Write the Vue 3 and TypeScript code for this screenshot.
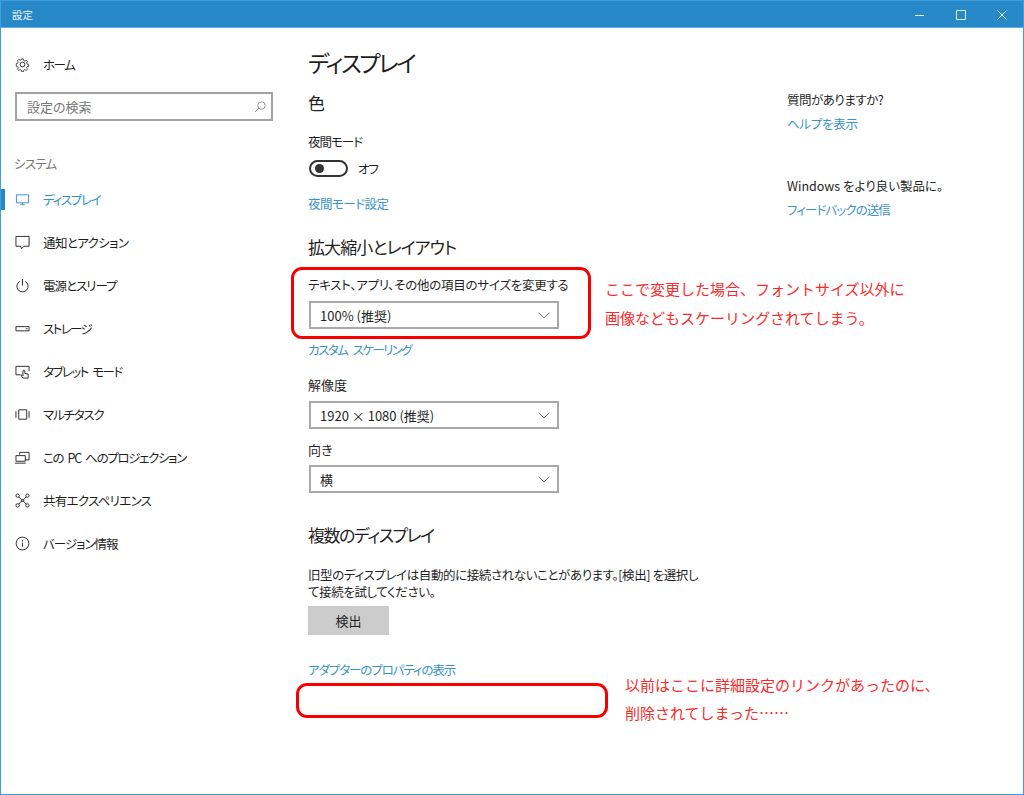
<script setup lang="ts">
// Windows 10 settings, display page, with red annotations on top
interface NavItem {
  label: string
  icon: string
  track: number
  active?: boolean
}

const navItems: NavItem[] = [
  { label: 'ディスプレイ', icon: 'display', track: -1.3, active: true },
  { label: '通知とアクション', icon: 'notify', track: -0.6 },
  { label: '電源とスリープ', icon: 'power', track: -1 },
  { label: 'ストレージ', icon: 'storage', track: -1.6 },
  { label: 'タブレット モード', icon: 'tablet', track: -1.5 },
  { label: 'マルチタスク', icon: 'multi', track: -1.2 },
  { label: 'この PC へのプロジェクション', icon: 'project', track: -1.35 },
  { label: '共有エクスペリエンス', icon: 'share', track: -0.7 },
  { label: 'バージョン情報', icon: 'info', track: -1 }
]
</script>

<template>
  <div class="window">
    <header class="titlebar">
      <span class="title">設定</span>
      <div class="controls">
        <svg width="10" height="10" viewBox="0 0 10 10"><path d="M0 5.500h9" /></svg>
        <svg width="10" height="10" viewBox="0 0 10 10"><path d="M.5.500h9v9h-9z" /></svg>
        <svg width="10" height="10" viewBox="0 0 10 10"><path d="M.5.500l9 9M9.500.500l-9 9" /></svg>
      </div>
    </header>

    <div class="body">
      <nav class="sidebar">
        <div class="home">
          <svg class="icon" viewBox="0 0 16 16">
            <path d="M6.800 1.200h2.400l.4 2 1.300.6 1.800-1.100 1.600 1.700-1.100 1.700.5 1.300 2 .5v2.400l-2 .4-.5 1.300 1.100 1.800-1.700 1.600-1.700-1.100-1.300.5-.4 2H6.800l-.4-2-1.300-.5-1.700 1.100-1.700-1.600 1.100-1.800-.5-1.300-2-.4V6.900l2-.5.5-1.300-1.100-1.700 1.700-1.700 1.700 1.100 1.300-.6z" transform="translate(1.100 1.100) scale(.86)" />
            <circle cx="8" cy="8" r="2.600" />
          </svg>
          <span>ホーム</span>
        </div>

        <div class="search">
          <span>設定の検索</span>
          <svg width="12" height="12" viewBox="0 0 14 14"><circle cx="8.700" cy="5.300" r="4.300" /><path d="M5.800 8.200L1 13" /></svg>
        </div>

        <div class="group">システム</div>

        <ul class="nav">
          <li v-for="item in navItems" :key="item.label" :class="{ active: item.active }">
            <svg class="icon" viewBox="0 0 16 16">
              <template v-if="item.icon === 'display'">
                <path d="M1.500 3h13v8.500h-13zM5.500 13.500h5M8 11.500v2" />
              </template>
              <template v-else-if="item.icon === 'notify'">
                <path d="M1 1.500h14v10.500H9.500L7 14.600 6 12H1z" />
              </template>
              <template v-else-if="item.icon === 'power'">
                <path d="M5 3.600a6 6 0 1 0 6 0M8 1v7" />
              </template>
              <template v-else-if="item.icon === 'storage'">
                <path d="M1 6h14v4.500H1z" /><path d="M11.500 8.300h2" />
              </template>
              <template v-else-if="item.icon === 'tablet'">
                <path d="M6 11.500H1V2.500h14v5" /><path d="M8.500 15l-2-3 1-.5 1 1V7.500a1 1 0 0 1 2 0v2.500l3.500.7V15z" />
              </template>
              <template v-else-if="item.icon === 'multi'">
                <path d="M4 3h8.500v10H4zM1 4.500v7M15 4.500v7" />
              </template>
              <template v-else-if="item.icon === 'project'">
                <path d="M5 5V2.500h10v8h-4M1 6h10v6H1zM0 14h11.500" />
              </template>
              <template v-else-if="item.icon === 'share'">
                <circle cx="2.800" cy="2.800" r="1.800" /><circle cx="13.200" cy="2.800" r="1.800" /><circle cx="2.800" cy="13.200" r="1.800" /><circle cx="13.200" cy="13.200" r="1.800" />
                <path d="M4.200 4.200l2.500 2.800h2.600l2.500-2.800M4.200 11.800l2.500-2.800h2.600l2.500 2.800M6.700 7v2M9.300 7v2" />
              </template>
              <template v-else>
                <circle cx="8" cy="8" r="6.800" /><path d="M8 7v4.500M8 4.300v1.400" />
              </template>
            </svg>
            <span :style="{ letterSpacing: item.track + 'px' }">{{ item.label }}</span>
          </li>
        </ul>
      </nav>

      <main class="content">
        <h1>ディスプレイ</h1>
        <h2 class="first">色</h2>
        <p class="label night">夜間モード</p>
        <div class="toggle-row">
          <span class="toggle"><i /></span>
          <span class="off">オフ</span>
        </div>
        <a class="link night-link">夜間モード設定</a>

        <h2 class="scale">拡大縮小とレイアウト</h2>
        <p class="label size">テキスト、アプリ、その他の項目のサイズを変更する</p>
        <div class="select">
          <span>100% (推奨)</span>
          <svg width="12" height="7" viewBox="0 0 12 7"><path d="M.500.500L6 6l5.500-5.500" /></svg>
        </div>
        <a class="link custom">カスタム スケーリング</a>

        <p class="label res">解像度</p>
        <div class="select">
          <span>1920 × 1080 (推奨)</span>
          <svg width="12" height="7" viewBox="0 0 12 7"><path d="M.500.500L6 6l5.500-5.500" /></svg>
        </div>
        <p class="label dir">向き</p>
        <div class="select">
          <span>横</span>
          <svg width="12" height="7" viewBox="0 0 12 7"><path d="M.500.500L6 6l5.500-5.500" /></svg>
        </div>

        <h2 class="multi">複数のディスプレイ</h2>
        <p class="label desc">旧型のディスプレイは自動的に接続されないことがあります。[検出] を選択し<br />て接続を試してください。</p>
        <button type="button">検出</button>
        <a class="link adapter">アダプターのプロパティの表示</a>
      </main>

      <aside class="help">
        <p class="ask">質問がありますか?</p>
        <a class="link help-link">ヘルプを表示</a>
        <p class="second">Windows をより良い製品に。</p>
        <a class="link feedback">フィードバックの送信</a>
      </aside>
    </div>

    <div class="mark mark-scale" />
    <div class="mark mark-removed" />
    <p class="note note-scale">ここで変更した場合、フォントサイズ以外に<br />画像などもスケーリングされてしまう。</p>
    <p class="note note-removed">以前はここに詳細設定のリンクがあったのに、<br />削除されてしまった……</p>
  </div>
</template>

<style scoped>
.window {
  position: relative;
  box-sizing: border-box;
  width: 1024px;
  height: 795px;
  overflow: hidden;
  background: #fff;
  border: 1px solid #3d9fdc;
  border-top: 0;
  color: #1f1f1f;
  font-family: "Noto Sans CJK JP", "Open Sans", sans-serif;
  font-size: 12.5px;
  font-feature-settings: "palt";
}

.titlebar {
  display: flex;
  align-items: center;
  justify-content: space-between;
  height: 28px;
  background: #2788c8;
  border-top: 1px solid #3d9fdc;
  border-bottom: 1px solid #5cb0e6;
  box-sizing: border-box;
  padding: 0 0 0 11px;
  color: #e8f3fa;
  font-size: 10.500px;
}

.controls {
  display: flex;
  gap: 31px;
  padding-top: 2px;
  padding-right: 16px;
}

.controls svg {
  fill: none;
  stroke: #e4f0f8;
  stroke-width: 1;
}

.body {
  display: flex;
}

.sidebar {
  flex: none;
  width: 307px;
  padding-top: 26px;
}

.icon {
  flex: none;
  width: 15px;
  height: 15px;
  fill: none;
  stroke: #262626;
  stroke-width: 1;
}

.home {
  display: flex;
  align-items: center;
  gap: 13px;
  height: 20px;
  padding-left: 14px;
  letter-spacing: -1.500px;
}

.search {
  display: flex;
  align-items: center;
  justify-content: space-between;
  box-sizing: border-box;
  width: 258px;
  height: 29px;
  margin: 18px 0 0 14px;
  padding: 0 5px 0 10px;
  border: 2px solid #a3a3a3;
  color: #777;
  font-size: 13px;
}

.search svg {
  fill: none;
  stroke: #8a8a8a;
  stroke-width: 1;
}

.group {
  margin: 33px 0 0 13px;
  height: 20px;
  line-height: 20px;
  color: #767676;
  letter-spacing: -.8px;
}

.nav {
  list-style: none;
  margin: 4px 0 0;
  padding: 0;
}

.nav li {
  position: relative;
  display: flex;
  align-items: center;
  gap: 13px;
  height: 43px;
  padding-left: 14px;
  word-spacing: 3px;
}

.nav li.active {
  color: #2f8fca;
}

.nav li.active .icon {
  stroke: #2f8fca;
}

.nav li.active::before {
  content: "";
  position: absolute;
  left: 0;
  top: 11px;
  width: 4px;
  height: 21px;
  background: #2788c8;
}

.content {
  flex: none;
  width: 479px;
}

.content p,
.help p {
  margin: 0;
}

h1 {
  margin: 18px 0 0;
  height: 32px;
  line-height: 32px;
  font-size: 23px;
  font-weight: 400;
  letter-spacing: -2.300px;
}

h2 {
  height: 26px;
  line-height: 26px;
  font-size: 17px;
  font-weight: 400;
}

h2.first {
  margin: 12px 0 0;
}

h2.scale {
  margin: 21px 0 0;
  letter-spacing: -.9px;
}

h2.multi {
  margin: 29px 0 0;
  letter-spacing: -1.500px;
}

.label {
  line-height: 18px;
}

.night {
  margin-top: 17px !important;
  letter-spacing: -1px;
}

.size {
  margin-top: 16px !important;
  letter-spacing: -.25px;
}

.res {
  margin-top: 17px !important;
  font-size: 13px;
}

.dir {
  margin-top: 12px !important;
  line-height: 17px;
  font-size: 13px;
}

.desc {
  margin-top: 18px !important;
  line-height: 17px;
  white-space: nowrap;
  letter-spacing: -.4px;
}

.toggle-row {
  display: flex;
  align-items: center;
  gap: 10px;
  margin-top: 9px;
  height: 17px;
}

.off {
  letter-spacing: -1px;
}

.toggle {
  display: flex;
  align-items: center;
  box-sizing: border-box;
  width: 39px;
  height: 17px;
  margin-left: 1px;
  padding-left: 4px;
  border: 2px solid #333;
  border-radius: 9px;
}

.toggle i {
  width: 9px;
  height: 9px;
  border-radius: 50%;
  background: #333;
}

.link {
  display: block;
  color: #3a93c9;
  line-height: 18px;
  letter-spacing: -.5px;
}

.night-link {
  margin-top: 18px;
}

.custom {
  margin-top: 12px;
  letter-spacing: -1.550px;
  word-spacing: 4px;
}

.adapter {
  margin-top: 26px;
  letter-spacing: -1.100px;
}

.select {
  display: flex;
  align-items: center;
  justify-content: space-between;
  box-sizing: border-box;
  width: 250px;
  height: 28px;
  margin: 7px 0 0 1px;
  padding: 0 7px 0 9px;
  border: 2px solid #a8a8a8;
  font-size: 13px;
  font-feature-settings: normal;
}

.select svg {
  fill: none;
  stroke: #777;
  stroke-width: 1;
}

button {
  display: block;
  width: 81px;
  height: 29px;
  margin: 6px 0 0;
  padding: 0;
  border: 0;
  background: #cccccc;
  color: #1f1f1f;
  font: inherit;
  font-size: 13px;
}

.help {
  flex: none;
  padding-top: 62px;
}

.ask {
  letter-spacing: -.5px;
}

.help .link {
  margin-top: 6px;
}

.help .help-link {
  letter-spacing: -.3px;
}

.help .feedback {
  letter-spacing: -.9px;
}

.help .second {
  margin-top: 43px;
}

.mark {
  position: absolute;
  box-sizing: border-box;
  border: 3px solid #f80000;
  border-radius: 11px;
}

.mark-scale {
  left: 290px;
  top: 267px;
  width: 300px;
  height: 72px;
}

.mark-removed {
  left: 295px;
  top: 683px;
  width: 312px;
  height: 35px;
}

.note {
  position: absolute;
  margin: 0;
  color: #f92a2a;
  font-size: 15px;
  font-feature-settings: normal;
  white-space: nowrap;
}

.note-scale {
  left: 604px;
  top: 274px;
  line-height: 29px;
}

.note-removed {
  left: 624px;
  top: 671px;
  line-height: 28px;
}
</style>
